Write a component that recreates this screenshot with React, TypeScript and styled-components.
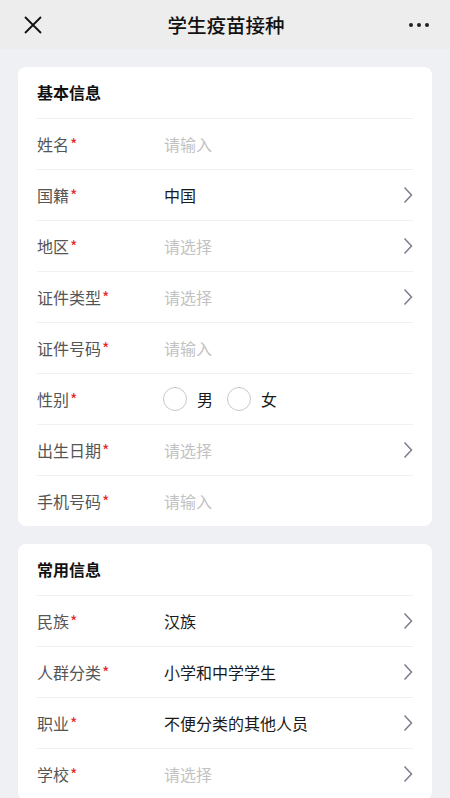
import styled, { createGlobalStyle } from "styled-components";

const GlobalStyle = createGlobalStyle`
  html, body {
    margin: 0;
    padding: 0;
    background: #eff0f4;
    font-family: "Noto Sans CJK SC", "Noto Sans", sans-serif;
  }
`;

const Page = styled.div`
  width: 450px;
  height: 798px;
  background: #eff0f4;
  overflow: hidden;
`;

const NavBar = styled.div`
  height: 49px;
  background: #ededed;
  display: flex;
  align-items: center;
  justify-content: space-between;
  padding: 0 20px 0 22px;
  box-sizing: border-box;
  .title {
    font-size: 19.5px;
    font-weight: 500;
    color: #111;
  }
  .icon {
    width: 22px;
    height: 22px;
    display: flex;
    align-items: center;
    justify-content: center;
  }
`;

const Content = styled.div`
  padding: 18px 18px 0;
  display: flex;
  flex-direction: column;
  gap: 18px;
`;

const Row = styled.div`
  height: 50px;
  border-top: 1px solid #f0f0f2;
  display: flex;
  align-items: center;
`;

const Card = styled.div<{ $open?: boolean }>`
  background: #fff;
  border-radius: 8px;
  padding: 0 19px;
  ${Row}:last-child {
    border-bottom: ${(p) => (p.$open ? "1px solid #f0f0f2" : "none")};
  }
`;

const CardTitle = styled.div`
  height: 51px;
  display: flex;
  align-items: center;
  font-size: 16px;
  font-weight: 700;
  color: #111;
  padding-bottom: 1px;
  box-sizing: border-box;
`;

const Label = styled.div`
  width: 127px;
  font-size: 16px;
  color: #555;
  .star {
    color: #e3262a;
    margin-left: 1px;
  }
`;

const Value = styled.div<{ $empty?: boolean }>`
  flex: 1;
  font-size: 16px;
  color: ${(p) => (p.$empty ? "#c2c2c2" : "#1a1a1a")};
`;

const Radios = styled.div`
  flex: 1;
  display: flex;
  align-items: center;
  gap: 15px;
`;

const Radio = styled.label`
  display: flex;
  align-items: center;
  gap: 10px;
  font-size: 16px;
  color: #1a1a1a;
  margin-left: -1px;
  .circle {
    width: 22px;
    height: 22px;
    border-radius: 50%;
    border: 1px solid #c8c8c8;
  }
`;

const Arrow = () => (
  <svg width="10" height="18" viewBox="0 0 10 18">
    <path d="M1.5 1.5 L8.5 9 L1.5 16.5" fill="none" stroke="#7b7e8b" strokeWidth="1.5" />
  </svg>
);

type Field = {
  label: string;
  value?: string;
  placeholder?: string;
  arrow?: boolean;
  radio?: boolean;
};

const basic: Field[] = [
  { label: "姓名", placeholder: "请输入" },
  { label: "国籍", value: "中国", arrow: true },
  { label: "地区", placeholder: "请选择", arrow: true },
  { label: "证件类型", placeholder: "请选择", arrow: true },
  { label: "证件号码", placeholder: "请输入" },
  { label: "性别", radio: true },
  { label: "出生日期", placeholder: "请选择", arrow: true },
  { label: "手机号码", placeholder: "请输入" },
];

const common: Field[] = [
  { label: "民族", value: "汉族", arrow: true },
  { label: "人群分类", value: "小学和中学学生", arrow: true },
  { label: "职业", value: "不便分类的其他人员", arrow: true },
  { label: "学校", placeholder: "请选择", arrow: true },
];

const FieldRow = ({ f }: { f: Field }) => (
  <Row>
    <Label>
      {f.label}
      <span className="star">*</span>
    </Label>
    {f.radio ? (
      <Radios>
        <Radio>
          <span className="circle" />男
        </Radio>
        <Radio>
          <span className="circle" />女
        </Radio>
      </Radios>
    ) : (
      <Value $empty={!f.value}>{f.value || f.placeholder}</Value>
    )}
    {f.arrow && <Arrow />}
  </Row>
);

export default function App() {
  return (
    <Page>
      <GlobalStyle />
      <NavBar>
        <div className="icon">
          <svg width="18" height="18" viewBox="0 0 18 18">
            <path d="M1 1 L17 17 M17 1 L1 17" stroke="#111" strokeWidth="1.8" />
          </svg>
        </div>
        <div className="title">学生疫苗接种</div>
        <div className="icon">
          <svg width="22" height="6" viewBox="0 0 22 6">
            <circle cx="3" cy="3" r="2" fill="#222" />
            <circle cx="11" cy="3" r="2" fill="#222" />
            <circle cx="19" cy="3" r="2" fill="#222" />
          </svg>
        </div>
      </NavBar>
      <Content>
        <Card>
          <CardTitle>基本信息</CardTitle>
          {basic.map((f) => (
            <FieldRow key={f.label} f={f} />
          ))}
        </Card>
        <Card $open>
          <CardTitle>常用信息</CardTitle>
          {common.map((f) => (
            <FieldRow key={f.label} f={f} />
          ))}
        </Card>
      </Content>
    </Page>
  );
}
